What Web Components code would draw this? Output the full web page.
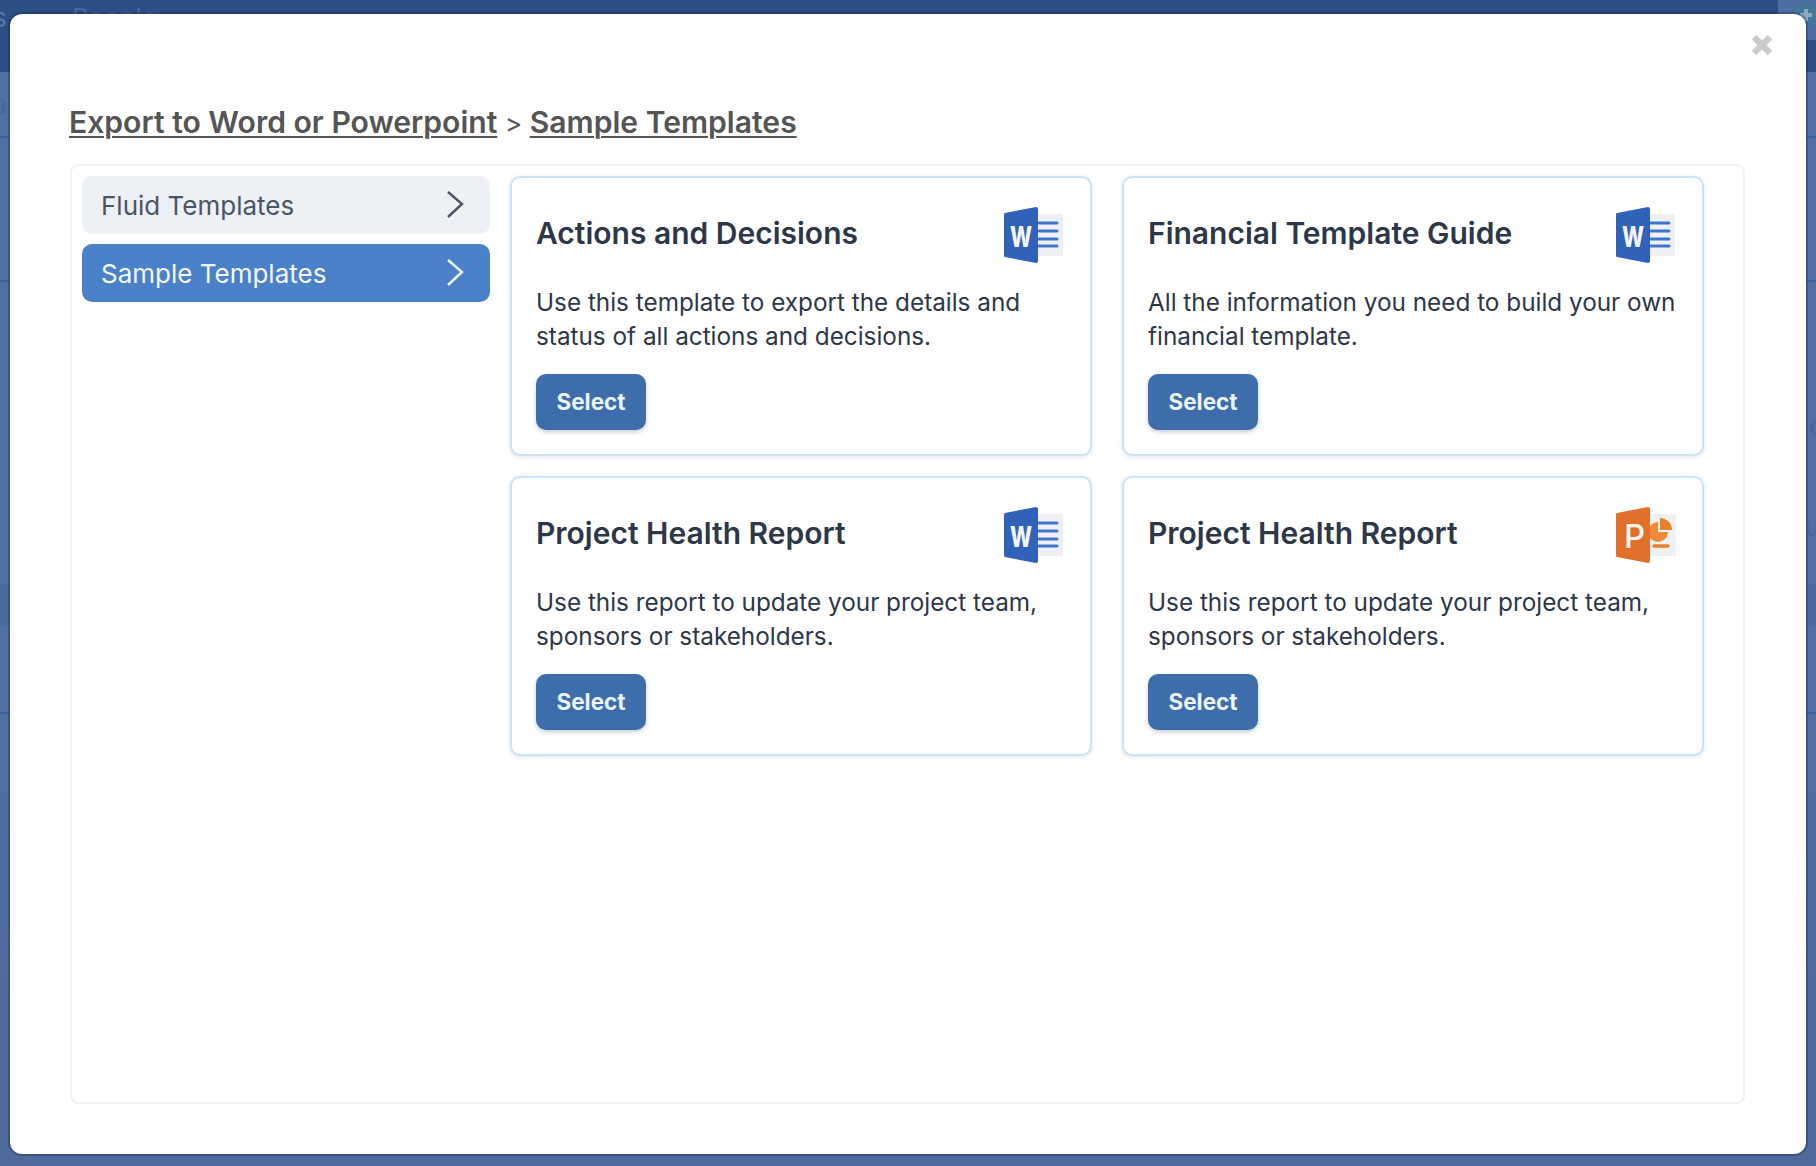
<!DOCTYPE html>
<html lang="en">
<head>
<meta charset="UTF-8" />
<title>Export to Word or Powerpoint</title>
<style>
  html, body { height: 100%; }
  body { margin: 0; overflow: hidden; font-family: Inter, "Liberation Sans", sans-serif; background: #4f6d9f; }
</style>
</head>
<body>
<app-backdrop>
  <export-modal>
    <template-nav slot="nav">
      <nav-item>Fluid Templates</nav-item>
      <nav-item active>Sample Templates</nav-item>
    </template-nav>
    <template-card heading="Actions and Decisions" kind="word">Use this template to export the details and status of all actions and decisions.</template-card>
    <template-card heading="Financial Template Guide" kind="word">All the information you need to build your own financial template.</template-card>
    <template-card heading="Project Health Report" kind="word">Use this report to update your project team, sponsors or stakeholders.</template-card>
    <template-card heading="Project Health Report" kind="ppt">Use this report to update your project team, sponsors or stakeholders.</template-card>
  </export-modal>
</app-backdrop>

<script>
  // page behind the modal, dimmed: only its edges are visible
  class AppBackdrop extends HTMLElement {
    constructor() {
      super();
      this.attachShadow({ mode: 'open' }).innerHTML = `
        <style>
          :host { display: block; position: relative; width: 1816px; height: 1166px; overflow: hidden;
            background: linear-gradient(180deg, #4f6ea3 0%, #516fa2 60%, #4e6a9a 100%); }
          .band { position: absolute; left: 0; right: 0; top: 0; height: 72px; background: #2c4f86; }
          .corner { position: absolute; left: 1778px; right: 0; top: 0; height: 40px; background: #4f6ea3; }
          .dim { position: absolute; left: 0; right: 0; top: 584px; height: 42px; background: #4b6b9e; }
          .rule { position: absolute; left: 0; right: 0; height: 2px; background: #3c639f; }
          .ghost { position: absolute; color: #44679c; font-size: 26px; line-height: 30px; }
          .plus { position: absolute; left: 1793px; top: 2px; }
          .modal { position: absolute; left: 10px; top: 14px; width: 1796px; height: 1140px; }
        </style>
        <div class="band"></div>
        <div class="corner"></div>
        <div class="dim"></div>
        <div class="rule" style="top:136px"></div>
        <div class="rule" style="top:280px"></div>
        <div class="rule" style="top:712px"></div>
        <span class="ghost" style="left:72px;top:3px">People</span>
        <span class="ghost" style="left:-7px;top:3px;color:#5877ad">s</span>
        <span class="ghost" style="left:-8px;top:90px">a</span>
        <span class="ghost" style="left:1809px;top:412px">c</span>
        <span class="ghost" style="left:1805px;top:512px">u</span>
        <svg class="plus" width="26" height="26" viewBox="0 0 26 26">
          <circle cx="13" cy="13" r="13" fill="#44769c"/>
          <path d="M13 7V19M7 13H19" stroke="#8aa7c0" stroke-width="4"/>
        </svg>
        <div class="modal"><slot></slot></div>`;
    }
  }

  class ExportModal extends HTMLElement {
    constructor() {
      super();
      this.attachShadow({ mode: 'open' }).innerHTML = `
        <style>
          :host { display: flex; flex-direction: column; box-sizing: border-box; height: 100%; padding: 89px 61px 50px 60px;
            background: #fff; border-radius: 12px; box-shadow: 0 0 0 2px rgba(20,40,80,.35); position: relative; }
          .close { position: absolute; top: 20px; right: 33px; width: 22px; height: 22px; }
          h1 { margin: 0 0 21px -1px; font-size: 30.100px; line-height: 38px; font-weight: 600; color: #555; }
          h1 a { color: inherit; text-decoration: underline; text-decoration-thickness: 2px; text-underline-offset: 3px; }
          h1 span { font-size: 26px; font-weight: 400; }
          .panel { flex: 1; display: flex; gap: 20px; align-items: flex-start; box-sizing: border-box; padding: 10px 11px 11px 10px;
            border: 2px solid #eef1f6; border-radius: 8px; }
          .grid { display: grid; grid-template-columns: 582px 582px; grid-auto-rows: 280px; column-gap: 30px; row-gap: 20px; }
        </style>
        <svg class="close" viewBox="0 0 22 22"><path d="M3 3 19 19M19 3 3 19" stroke="#cbcbcb" stroke-width="6.500" fill="none"/></svg>
        <h1><a>Export to Word or Powerpoint</a> <span>&gt;</span> <a>Sample Templates</a></h1>
        <div class="panel">
          <slot name="nav"></slot>
          <div class="grid"><slot></slot></div>
        </div>`;
    }
  }

  class TemplateNav extends HTMLElement {
    constructor() {
      super();
      this.attachShadow({ mode: 'open' }).innerHTML = `
        <style>:host { display: flex; flex-direction: column; gap: 10px; width: 408px; flex: none; }</style>
        <slot></slot>`;
    }
  }

  class NavItem extends HTMLElement {
    constructor() {
      super();
      this.attachShadow({ mode: 'open' }).innerHTML = `
        <style>
          :host { display: flex; align-items: center; justify-content: space-between; box-sizing: border-box; height: 58px;
            padding: 1px 25px 0 19px; border-radius: 10px; background: #edf0f5; color: #4a5568; font-size: 26px; }
          :host([active]) { background: #4a81c8; color: #f5f8fc; }
          svg { width: 20px; height: 30px; margin-top: -3px; }
        </style>
        <slot></slot>
        <svg viewBox="0 0 20 30"><path d="M3 3 17 15 3 28" fill="none" stroke="currentColor" stroke-width="2.400"/></svg>`;
    }
  }

  const WORD_ICON = `
    <svg width="62" height="58" viewBox="0 0 62 58">
      <rect x="30" y="8" width="30" height="42" rx="2" fill="#eef0f3"/>
      <path d="M36 17H54M36 25H54M36 33H54M36 40H54" stroke="#3f76cc" stroke-width="3" stroke-linecap="round"/>
      <path d="M2 7 33 1Q35 1 35 3V55Q35 57 33 57L2 51Q1 51 1 49V9Q1 7 2 7Z" fill="#2f62b8"/>
      <text x="7" y="41" font-family="Inter, sans-serif" font-size="28" font-weight="800" fill="#f4f6fa" textLength="22" lengthAdjust="spacingAndGlyphs">W</text>
    </svg>`;

  const PPT_ICON = `
    <svg width="62" height="58" viewBox="0 0 62 58">
      <rect x="30" y="8" width="31" height="42" rx="2" fill="#eef0f3"/>
      <path d="M45 12A12 12 0 0 1 57 24H45Z" fill="#e8812e"/>
      <path d="M43 16A10 10 0 1 0 53 26H43Z" fill="#ec8a3a"/>
      <path d="M39 40H53" stroke="#e8812e" stroke-width="3.500" stroke-linecap="round"/>
      <path d="M2 7 33 1Q35 1 35 3V55Q35 57 33 57L2 51Q1 51 1 49V9Q1 7 2 7Z" fill="#e0702a"/>
      <text x="9" y="42" font-family="Inter, sans-serif" font-size="33" font-weight="500" fill="#f9f3ee">P</text>
    </svg>`;

  class TemplateCard extends HTMLElement {
    constructor() {
      super();
      const icon = this.getAttribute('kind') === 'ppt' ? PPT_ICON : WORD_ICON;
      this.attachShadow({ mode: 'open' }).innerHTML = `
        <style>
          :host { display: flex; flex-direction: column; align-items: flex-start; box-sizing: border-box; padding: 28px 25px 0 24px;
            border: 2px solid #c9e3f7; border-radius: 10px; background: #fff; box-shadow: 0 1px 4px rgba(30,60,110,.14); }
          header { display: flex; justify-content: space-between; width: 100%; height: 56px; align-items: flex-start; }
          h2 { margin: 0; padding-top: 9px; font-size: 30px; line-height: 36px; font-weight: 600; color: #2d3748; }
          p { margin: 23px 0 21px; font-size: 24.300px; line-height: 34px; color: #2d3748; }
          button { all: unset; box-sizing: border-box; width: 110px; height: 56px; text-align: center; line-height: 56px;
            border-radius: 10px; background: #3d6daa; color: #ebf3fb; font-size: 22.500px; font-weight: 700;
            box-shadow: 0 2px 4px rgba(30,50,90,.25); }
        </style>
        <header><h2>${this.getAttribute('heading')}</h2>${icon}</header>
        <p><slot></slot></p>
        <button>Select</button>`;
    }
  }

  customElements.define('app-backdrop', AppBackdrop);
  customElements.define('export-modal', ExportModal);
  customElements.define('template-nav', TemplateNav);
  customElements.define('nav-item', NavItem);
  customElements.define('template-card', TemplateCard);
</script>
</body>
</html>
